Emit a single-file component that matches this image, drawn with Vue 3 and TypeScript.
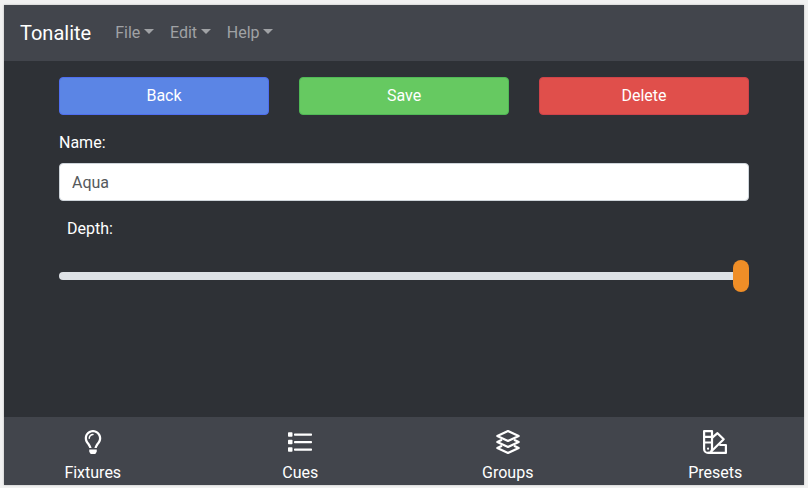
<script setup lang="ts">
import { ref } from 'vue'

type IconName = 'bulb' | 'list' | 'layers' | 'swatch'
interface Tab {
  label: string
  icon: IconName
}

const menus: string[] = ['File', 'Edit', 'Help']
const actions = [
  { label: 'Back', kind: 'primary' },
  { label: 'Save', kind: 'success' },
  { label: 'Delete', kind: 'danger' },
]
const tabs: Tab[] = [
  { label: 'Fixtures', icon: 'bulb' },
  { label: 'Cues', icon: 'list' },
  { label: 'Groups', icon: 'layers' },
  { label: 'Presets', icon: 'swatch' },
]
const name = ref('Aqua')
const depth = ref(100)
</script>

<template>
  <div class="desktop">
    <div class="window">
      <nav class="navbar">
        <a class="brand">Tonalite</a>
        <a v-for="menu in menus" :key="menu" class="menu">{{ menu }}<span class="caret"></span></a>
      </nav>

      <main class="content">
        <div class="actions">
          <button v-for="action in actions" :key="action.label" class="btn" :class="action.kind">
            {{ action.label }}
          </button>
        </div>
        <label class="label" for="name">Name:</label>
        <input id="name" v-model="name" class="field" type="text" />
        <label class="label depth" for="depth">Depth:</label>
        <input id="depth" v-model="depth" class="slider" type="range" min="0" max="100" />
      </main>

      <footer class="tabs">
        <a v-for="tab in tabs" :key="tab.label" class="tab">
          <svg v-if="tab.icon === 'bulb'" class="icon" viewBox="-80 0 512 512" fill="currentColor">
            <path d="M176 80c-52.94 0-96 43.06-96 96 0 8.84 7.16 16 16 16s16-7.16 16-16c0-35.3 28.72-64 64-64 8.84 0 16-7.16 16-16s-7.16-16-16-16zM96.06 459.17c0 3.15.93 6.22 2.68 8.84l24.51 36.84c2.97 4.46 7.97 7.14 13.32 7.14h78.85c5.36 0 10.36-2.68 13.32-7.14l24.51-36.84c1.74-2.62 2.67-5.7 2.68-8.84l.05-43.18H96.02l.04 43.18zM176 0C73.72 0 0 82.97 0 176c0 44.37 16.45 84.85 43.56 115.78 16.64 18.99 42.74 58.8 52.42 92.16v.06h48v-.12c-.01-4.77-.72-9.51-2.15-14.07-5.59-17.81-22.82-64.77-62.17-109.67-20.54-23.43-31.52-53.15-31.61-84.14-.2-73.64 59.67-128 127.95-128 70.58 0 128 57.42 128 128 0 30.97-11.24 60.85-31.65 84.14-39.11 44.61-56.42 91.47-62.1 109.46a47.507 47.507 0 0 0-2.22 14.3v.1h48v-.05c9.68-33.37 35.78-73.18 52.42-92.16C335.55 260.85 352 220.37 352 176 352 78.8 273.2 0 176 0z" />
          </svg>
          <svg v-else-if="tab.icon === 'list'" class="icon" viewBox="0 0 24 24" fill="currentColor">
            <rect x="0" y="2.25" width="4.5" height="4.5" rx=".75" />
            <rect x="0" y="9.75" width="4.5" height="4.5" rx=".75" />
            <rect x="0" y="17.25" width="4.5" height="4.5" rx=".75" />
            <rect x="6" y="3.4" width="18" height="2.25" rx=".7" />
            <rect x="6" y="10.9" width="18" height="2.25" rx=".7" />
            <rect x="6" y="18.4" width="18" height="2.25" rx=".7" />
          </svg>
          <svg v-else-if="tab.icon === 'layers'" class="icon" viewBox="0 0 24 24" fill="none" stroke="currentColor" stroke-width="2.2" stroke-linejoin="round">
            <path d="M12 1.1 22.7 6 12 10.900 1.300 6z" />
            <path d="M6 9.700 1.300 12 12 16.900 22.700 12 18 9.700" />
            <path d="M6 15.700 1.300 18 12 22.900 22.700 18 18 15.700" />
          </svg>
          <svg v-else class="icon" viewBox="0 0 24 24" fill="none" stroke="currentColor" stroke-width="2.2" stroke-linejoin="round">
            <path d="M1.100 1.100H9v17.800a3.950 3.950 0 0 1-7.900 0zM1.100 6.800H9M1.100 12.500H9" />
            <path d="M9 7.800 14.500 3.200 20.700 9.300 7.900 21.800" />
            <path d="M16.300 15h6.600v7.900H5.100" />
            <circle cx="5.050" cy="18.700" r="1.100" fill="currentColor" stroke="none" />
          </svg>
          <span class="tab-label">{{ tab.label }}</span>
        </a>
      </footer>
    </div>
  </div>
</template>

<style>
body {
  margin: 0;
  background: #f1f1f1;
}
</style>

<style scoped>
.desktop,
.desktop * {
  box-sizing: border-box;
}
.desktop {
  height: 488px;
  padding: 5px 4px 3px;
  overflow: hidden;
  font: 16px/24px Roboto, "Liberation Sans", sans-serif;
  color: #fff;
}
.window {
  display: flex;
  flex-direction: column;
  height: 480px;
  background: #2e3136;
  overflow: hidden;
  box-shadow: 0 0 2px rgba(0, 0, 0, 0.25);
}
.navbar {
  display: flex;
  align-items: center;
  height: 56px;
  padding: 0 16px;
  background: #42454c;
}
.brand {
  margin-right: 16px;
  font-size: 20px;
  line-height: 30px;
}
.menu {
  padding: 0 8px;
  color: #a0a2a5;
}
.caret {
  display: inline-block;
  margin-left: 3.7px;
  vertical-align: 4px;
  border: 5px solid transparent;
  border-top-color: currentColor;
  border-bottom: 0;
}
.content {
  display: flex;
  flex: 1;
  flex-direction: column;
  width: 720px;
  margin: 0 auto;
  padding: 16px 15px 0;
}
.actions {
  display: grid;
  grid-template-columns: repeat(3, 1fr);
  gap: 30px;
  margin-bottom: 16px;
}
.btn {
  height: 38px;
  padding: 0;
  border: 1px solid;
  border-radius: 4px;
  color: #fff;
  font: inherit;
}
.primary {
  background: #5b85e5;
  border-color: #4f6ef0;
}
.success {
  background: #66c961;
  border-color: #50b956;
}
.danger {
  background: #e04f4b;
  border-color: #cf434a;
}
.label {
  margin-bottom: 8px;
}
.field {
  width: 100%;
  height: 38px;
  margin: 0 0 16px;
  padding: 6px 12px;
  border: 1px solid #ced4da;
  border-radius: 4px;
  background: #fff;
  color: #55595c;
  font: inherit;
}
.depth {
  padding-left: 8px;
}
.slider {
  appearance: none;
  width: 100%;
  height: 32px;
  margin: 11px 0 0;
  background: transparent;
}
.slider::-webkit-slider-runnable-track {
  height: 8px;
  border-radius: 4px;
  background: #dee2e6;
}
.slider::-webkit-slider-thumb {
  appearance: none;
  width: 16px;
  height: 32px;
  margin-top: -12px;
  border-radius: 8px;
  background: #ef8e27;
}
.tabs {
  display: grid;
  grid-template-columns: repeat(4, 1fr);
  height: 68px;
  margin: 0 -15px;
  background: #42454c;
}
.tab {
  display: flex;
  flex-direction: column;
  align-items: center;
  padding-top: 13px;
}
.icon {
  width: 24px;
  height: 24px;
  margin-bottom: 7px;
}
</style>
